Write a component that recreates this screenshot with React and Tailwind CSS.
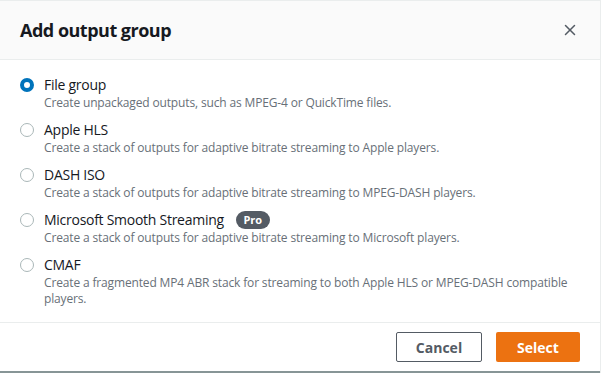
import { X } from 'lucide-react';

const GROUPS = [
    { id: 'file', label: 'File group', desc: 'Create unpackaged outputs, such as MPEG-4 or QuickTime files.' },
    { id: 'hls', label: 'Apple HLS', desc: 'Create a stack of outputs for adaptive bitrate streaming to Apple players.' },
    { id: 'dash', label: 'DASH ISO', desc: 'Create a stack of outputs for adaptive bitrate streaming to MPEG-DASH players.' },
    { id: 'mss', label: 'Microsoft Smooth Streaming', desc: 'Create a stack of outputs for adaptive bitrate streaming to Microsoft players.', pro: true },
    { id: 'cmaf', label: 'CMAF', desc: 'Create a fragmented MP4 ABR stack for streaming to both Apple HLS or MPEG-DASH compatible players.' },
];

const App = () => {
    const selected = 'file';

    return (
        <div
            className="w-[601px] h-[373px] bg-white border-t border-r border-[#eaeded] flex flex-col"
            style={{ fontFamily: '"Open Sans", "Noto Sans", sans-serif' }}
        >
            {/* 헤더 */}
            <div className="h-[59px] bg-[#fafafa] border-b border-[#eaeded] flex items-center justify-between pl-5 pr-[21px] shrink-0">
                <h1 className="text-[18px] font-bold text-[#16191f] tracking-[-0.5px]">Add output group</h1>
                <X className="w-[18px] h-[18px] text-[#545b64]" strokeWidth={2} />
            </div>

            {/* 목록 */}
            <div className="flex-1 pl-5 pr-6 pt-[16px] flex flex-col gap-[10px]">
                {GROUPS.map((g) => (
                    <div key={g.id} className="flex items-start gap-[10px]">
                        <span
                            className={
                                g.id === selected
                                    ? 'mt-[2px] w-[14px] h-[14px] rounded-full border-[4px] border-[#0073bb] bg-white shrink-0'
                                    : 'mt-[2px] w-[14px] h-[14px] rounded-full border border-[#aab7b8] bg-white shrink-0'
                            }
                        />
                        <div className="flex flex-col">
                            <div className="flex items-center gap-[12px] h-[18px]">
                                <span className="text-[14px] text-[#16191f] leading-[18px] tracking-[-0.27px]">{g.label}</span>
                                {g.pro && (
                                    <span className="bg-[#545b64] text-white text-[11px] font-bold rounded-full w-[34px] text-center h-[18px] leading-[18px]">
                                        Pro
                                    </span>
                                )}
                            </div>
                            <p className="text-[12px] text-[#687078] leading-[16px] mt-[1px] tracking-[-0.15px]">{g.desc}</p>
                        </div>
                    </div>
                ))}
            </div>

            {/* 푸터 */}
            <div className="h-[51px] border-t border-[#eaeded] border-b-2 border-b-[#879596] flex items-start justify-end gap-[14px] pt-[9px] pr-[20px] shrink-0">
                <button
                    type="button"
                    className="w-[86px] h-[30px] border border-[#545b64] rounded-[2px] text-[14px] font-bold text-[#545b64] bg-white"
                >
                    Cancel
                </button>
                <button
                    type="button"
                    className="w-[84px] h-[30px] rounded-[2px] text-[14px] font-bold text-white bg-[#ec7211]"
                >
                    Select
                </button>
            </div>
        </div>
    );
};

export default App;
